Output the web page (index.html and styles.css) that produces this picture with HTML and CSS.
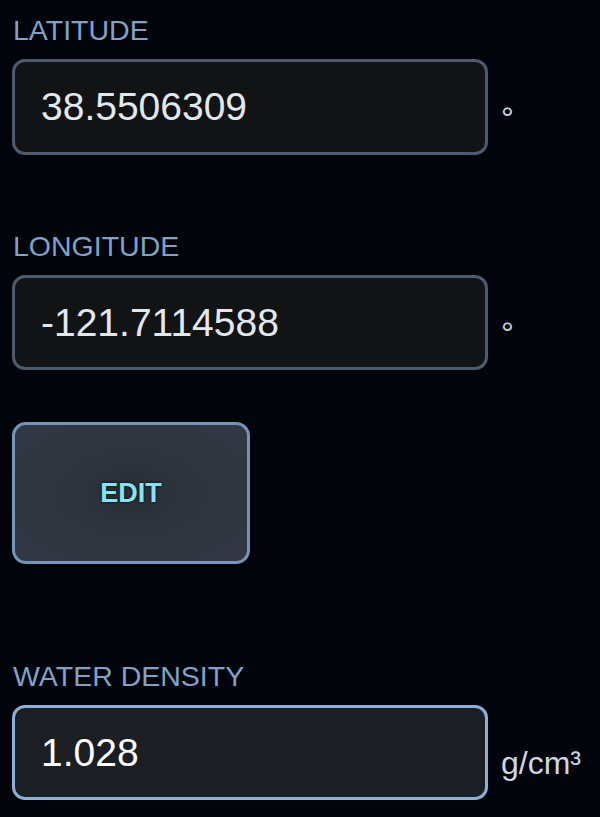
FILE: index.html
```
<!DOCTYPE html>
<html lang="en">
<head>
<meta charset="utf-8">
<title>Location settings</title>
<link rel="stylesheet" href="styles.css">
</head>
<body>
<main class="panel">
  <section class="field field-lat">
    <label class="field-label" for="lat">LATITUDE</label>
    <div class="field-row">
      <input class="field-input" id="lat" type="text" value="38.5506309">
      <span class="field-unit">°</span>
    </div>
  </section>
  <section class="field field-lon">
    <label class="field-label" for="lon">LONGITUDE</label>
    <div class="field-row">
      <input class="field-input" id="lon" type="text" value="-121.7114588">
      <span class="field-unit">°</span>
    </div>
  </section>
  <div class="actions">
    <button class="edit-btn" type="button">EDIT</button>
  </div>
  <section class="field field-density">
    <label class="field-label" for="density">WATER DENSITY</label>
    <div class="field-row">
      <input class="field-input field-input--active" id="density" type="text" value="1.028">
      <span class="field-unit">g/cm³</span>
    </div>
  </section>
</main>
</body>
</html>
```
FILE: styles.css
```
html, body {
  margin: 0;
  padding: 0;
}
body {
  background: #02040b;
  font-family: "Liberation Sans", Arial, sans-serif;
  width: 600px;
  height: 817px;
  overflow: hidden;
}
.panel {
  display: flex;
  flex-direction: column;
  padding: 14px 0 0 12px;
}
.field {
  display: flex;
  flex-direction: column;
  gap: 13px;
}
.field-lat {
  margin-bottom: 75px;
}
.field-lon {
  margin-bottom: 52px;
}
.actions {
  margin-bottom: 96px;
}
.field-label {
  display: block;
  font-size: 28.5px;
  line-height: 32px;
  color: #7ea3c6;
  padding-left: 1px;
}
.field-row {
  display: flex;
  align-items: flex-end;
  gap: 13px;
}
.field-input {
  box-sizing: border-box;
  width: 476px;
  height: 96px;
  margin: 0;
  padding: 0 0 0 26px;
  border: 3px solid #4b5c71;
  border-radius: 13px;
  background: #111315;
  color: #e3e8ee;
  font-family: "Liberation Sans", Arial, sans-serif;
  font-size: 39px;
  outline: none;
}
.field-lon .field-input {
  height: 95px;
}
.field-input--active {
  height: 95px;
  border-color: #8cafd6;
  background: #1b1e23;
  color: #ffffff;
}
.field-unit {
  font-size: 32px;
  line-height: 32px;
  margin-bottom: 21px;
  color: #cdd7e4;
}
.edit-btn {
  box-sizing: border-box;
  width: 238px;
  height: 142px;
  margin: 0;
  padding: 0;
  border: 3px solid #7494b8;
  border-radius: 14px;
  background: radial-gradient(ellipse at center, #2a2e35 0%, #2f353f 45%, #323844 100%);
  color: #84e4f6;
  font-family: "Liberation Sans", Arial, sans-serif;
  font-weight: bold;
  font-size: 27px;
  text-shadow: 0 0 3px rgba(0, 0, 0, 0.9);
  cursor: pointer;
}
```
